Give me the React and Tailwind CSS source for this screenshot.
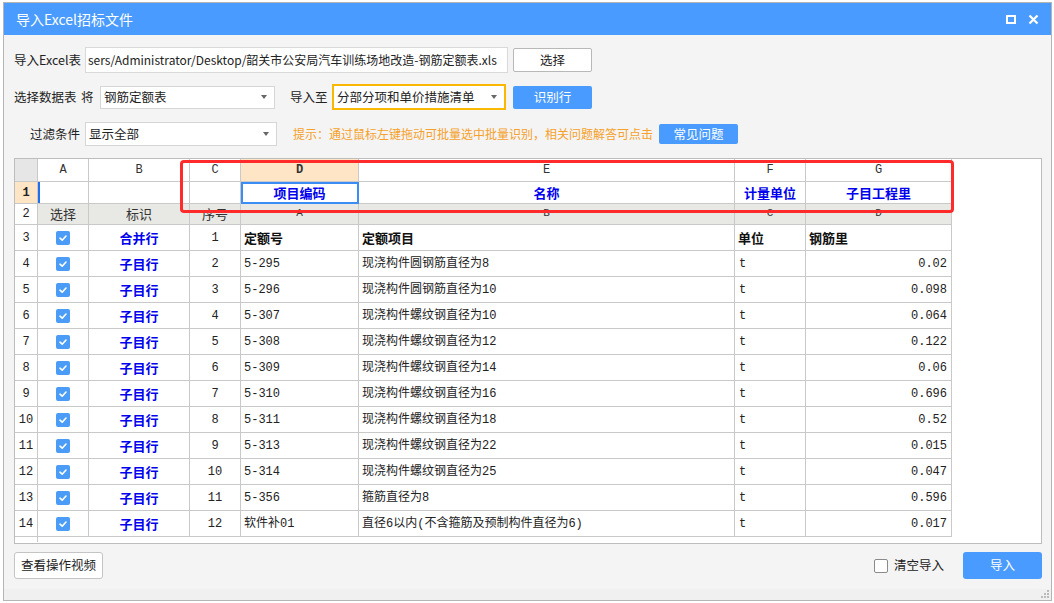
const sans = "font-['Noto_Sans_CJK_SC',sans-serif]";
const mono = "font-['Liberation_Mono','Noto_Sans_CJK_SC',monospace]";

const W = ['w-[23px]', 'w-[51px]', 'w-[101px]', 'w-[51px]', 'w-[118px]', 'w-[376px]', 'w-[71px]', 'w-[146px]'];

const rows = [
  ['2', '5-295', '现浇构件圆钢筋直径为8', '0.02'],
  ['3', '5-296', '现浇构件圆钢筋直径为10', '0.098'],
  ['4', '5-307', '现浇构件螺纹钢直径为10', '0.064'],
  ['5', '5-308', '现浇构件螺纹钢直径为12', '0.122'],
  ['6', '5-309', '现浇构件螺纹钢直径为14', '0.06'],
  ['7', '5-310', '现浇构件螺纹钢直径为16', '0.696'],
  ['8', '5-311', '现浇构件螺纹钢直径为18', '0.52'],
  ['9', '5-313', '现浇构件螺纹钢直径为22', '0.015'],
  ['10', '5-314', '现浇构件螺纹钢直径为25', '0.047'],
  ['11', '5-356', '箍筋直径为8', '0.596'],
  ['12', '软件补01', '直径6以内(不含箍筋及预制构件直径为6)', '0.017'],
];

function Cell({ i, className = '', children }) {
  return (
    <div className={`${W[i]} shrink-0 border-r border-b border-[#c9c9c9] flex items-center overflow-hidden whitespace-nowrap ${className}`}>
      {children}
    </div>
  );
}

function Check() {
  return (
    <div className="flex h-[14px] w-[14px] items-center justify-center rounded-[2px] bg-[#4b9cf7]">
      <svg width="10" height="10" viewBox="0 0 10 10">
        <path d="M2 5.2 L4.2 7.2 L8 3" stroke="white" strokeWidth="1.6" fill="none" strokeLinecap="round" strokeLinejoin="round" />
      </svg>
    </div>
  );
}

function Arrow() {
  return <span className="h-0 w-0 border-x-[3.5px] border-t-[4px] border-x-transparent border-t-[#666]" />;
}

function Select({ w, text, className = '' }) {
  return (
    <div className={`${w} flex items-center justify-between bg-white pl-[3px] pr-[7px] text-[12.5px] text-[#222] ${className}`}>
      <span>{text}</span>
      <Arrow />
    </div>
  );
}

function Grid() {
  const letter = `${mono} text-[12px] text-[#333] justify-center`;
  const blue = `${sans} text-[13px] font-bold text-[#0000ee] justify-center`;
  return (
    <div className="relative ml-[10px] mt-[11px] h-[386px] w-[1028px] border border-[#bdbdbd] bg-white">
      <div className="flex h-[23px]">
        <Cell i={0} className="bg-[#e6e6e6]" />
        {['A', 'B', 'C', 'D', 'E', 'F', 'G'].map((l, k) => (
          <Cell key={l} i={k + 1} className={`${letter} ${l === 'D' ? 'bg-[#fde5c6] font-bold' : ''}`}>{l}</Cell>
        ))}
      </div>
      <div className="flex h-[22px]">
        <Cell i={0} className={`${mono} justify-center bg-[#fde5c6] text-[12px] font-bold text-[#222]`}>1</Cell>
        <Cell i={1} className="shadow-[inset_2px_0_0_#1f6fee]" />
        <Cell i={2} />
        <Cell i={3} />
        <Cell i={4} className={`${blue} outline-2 -outline-offset-2 outline-[#3b8cf5]`}>项目编码</Cell>
        <Cell i={5} className={blue}>名称</Cell>
        <Cell i={6} className={blue}>计量单位</Cell>
        <Cell i={7} className={blue}>子目工程里</Cell>
      </div>
      <div className="flex h-[21px]">
        <Cell i={0} className={`${mono} justify-center text-[12px] text-[#222]`}>2</Cell>
        <Cell i={1} className={`${sans} justify-center bg-[#e8e8e4] text-[13px] text-[#333]`}>选择</Cell>
        <Cell i={2} className={`${sans} justify-center bg-[#e8e8e4] text-[13px] text-[#333]`}>标识</Cell>
        <Cell i={3} className={`${sans} justify-center bg-[#e8e8e4] text-[13px] text-[#333]`}>序号</Cell>
        {['A', 'B', 'C', 'D'].map((l, k) => (
          <Cell key={l} i={k + 4} className={`${mono} items-end justify-center bg-[#e8e8e4] pb-[3px] text-[11px] text-[#333]`}>{l}</Cell>
        ))}
      </div>
      <div className="flex h-[26px]">
        <Cell i={0} className={`${mono} justify-center text-[12px] text-[#222]`}>3</Cell>
        <Cell i={1} className="justify-center"><Check /></Cell>
        <Cell i={2} className={blue}>合并行</Cell>
        <Cell i={3} className={`${mono} justify-center text-[12px] text-[#222]`}>1</Cell>
        <Cell i={4} className={`${sans} pl-[3px] text-[13px] font-bold text-[#111]`}>定额号</Cell>
        <Cell i={5} className={`${sans} pl-[3px] text-[13px] font-bold text-[#111]`}>定额项目</Cell>
        <Cell i={6} className={`${sans} pl-[3px] text-[13px] font-bold text-[#111]`}>单位</Cell>
        <Cell i={7} className={`${sans} pl-[3px] text-[13px] font-bold text-[#111]`}>钢筋里</Cell>
      </div>
      {rows.map((r, k) => (
        <div key={k} className="flex h-[26px]">
          <Cell i={0} className={`${mono} justify-center text-[12px] text-[#222]`}>{k + 4}</Cell>
          <Cell i={1} className="justify-center"><Check /></Cell>
          <Cell i={2} className={blue}>子目行</Cell>
          <Cell i={3} className={`${mono} justify-center text-[12px] text-[#222]`}>{r[0]}</Cell>
          <Cell i={4} className={`${mono} pl-[3px] text-[12px] text-[#222]`}>{r[1]}</Cell>
          <Cell i={5} className={`${mono} pl-[3px] text-[12px] text-[#222]`}>{r[2]}</Cell>
          <Cell i={6} className={`${mono} pl-[4px] text-[12px] text-[#222]`}>t</Cell>
          <Cell i={7} className={`${mono} justify-end pr-[4px] text-[12px] text-[#222]`}>{r[3]}</Cell>
        </div>
      ))}
      <div className="h-[5px] w-[23px] border-r border-[#c9c9c9]" />
      <div className="pointer-events-none absolute left-[165px] top-[1px] h-[53px] w-[774px] rounded-[4px] border-[3px] border-[#ff2a2a]" />
    </div>
  );
}

export default function App() {
  return (
    <div className={`h-[603px] w-[1054px] overflow-hidden bg-white ${sans}`}>
      <div className="ml-[3px] mt-[2px] flex h-[599px] w-[1049px] flex-col border border-[#b5b5b5] bg-[#f4f4f4]">
        <div className="flex h-[32px] shrink-0 items-center justify-between bg-[#4a9bff] pl-[12px] pr-[12px]">
          <span className="text-[14px] text-white">导入Excel招标文件</span>
          <div className="flex items-center gap-[12px]">
            <div className="h-[9px] w-[10px] border-2 border-white" />
            <svg width="11" height="11" viewBox="0 0 11 11">
              <path d="M1.5 1.5 L9.5 9.5 M9.5 1.5 L1.5 9.5" stroke="white" strokeWidth="2.2" />
            </svg>
          </div>
        </div>

        <div className="ml-[10px] mt-[12px] flex h-[26px] items-center text-[12.5px] text-[#222]">
          <span className="w-[71px]">导入Excel表</span>
          <div className="flex h-[26px] w-[423px] items-center overflow-hidden whitespace-nowrap border border-[#d9d9d9] bg-white pl-[2px] text-[12px] text-[#222]">
            sers/Administrator/Desktop/韶关市公安局汽车训练场地改造-钢筋定额表.xls
          </div>
          <button className="ml-[5px] h-[24px] w-[79px] rounded-[2px] border border-[#b8b8b8] bg-white text-[12.5px] text-[#222]">选择</button>
        </div>

        <div className="ml-[10px] mt-[11px] flex h-[26px] items-center text-[12.5px] text-[#222]">
          <span className="w-[67px]">选择数据表</span>
          <span className="w-[19px]">将</span>
          <Select w="w-[175px]" text="钢筋定额表" className="h-[23px] border border-[#d6d6d6]" />
          <span className="ml-[15px] w-[42px]">导入至</span>
          <Select w="w-[174px]" text="分部分项和单价措施清单" className="h-[26px] border-2 border-[#fbb800]" />
          <button className="ml-[7px] h-[23px] w-[79px] rounded-[2px] bg-[#4a9bff] text-[12.5px] text-white">识别行</button>
        </div>

        <div className="ml-[10px] mt-[11px] flex h-[26px] items-center text-[12.5px] text-[#222]">
          <span className="ml-[16px] w-[55px]">过滤条件</span>
          <Select w="w-[192px]" text="显示全部" className="h-[24px] border border-[#d6d6d6]" />
          <span className="ml-[16px] w-[366px] whitespace-nowrap text-[12px] text-[#f5a12a]">提示：通过鼠标左键拖动可批量选中批量识别，相关问题解答可点击</span>
          <button className="h-[20px] w-[79px] rounded-[2px] bg-[#4a9bff] text-[12.5px] text-white">常见问题</button>
        </div>

        <Grid />

        <div className="ml-[10px] mt-[8px] flex h-[27px] w-[1028px] items-center">
          <button className="h-[27px] w-[89px] rounded-[3px] border border-[#c4c4c4] bg-white text-[12.5px] text-[#222]">查看操作视频</button>
          <div className="ml-auto flex items-center">
            <span className="h-[14px] w-[14px] rounded-[2px] border border-[#8a8a8a] bg-white" />
            <span className="ml-[6px] text-[12.5px] text-[#222]">清空导入</span>
          </div>
          <button className="ml-[19px] h-[27px] w-[79px] rounded-[3px] bg-[#4a9bff] text-[12.5px] text-white">导入</button>
        </div>

        <div className="relative mt-auto h-[11px] bg-[#f0f0f0]">
          <div className="absolute bottom-[2px] right-[2px] grid grid-cols-3 gap-[1px]">
            <span />
            <span />
            <span className="h-[2px] w-[2px] bg-[#bbb]" />
            <span />
            <span className="h-[2px] w-[2px] bg-[#bbb]" />
            <span className="h-[2px] w-[2px] bg-[#bbb]" />
            <span className="h-[2px] w-[2px] bg-[#bbb]" />
            <span className="h-[2px] w-[2px] bg-[#bbb]" />
            <span className="h-[2px] w-[2px] bg-[#bbb]" />
          </div>
        </div>
      </div>
    </div>
  );
}
